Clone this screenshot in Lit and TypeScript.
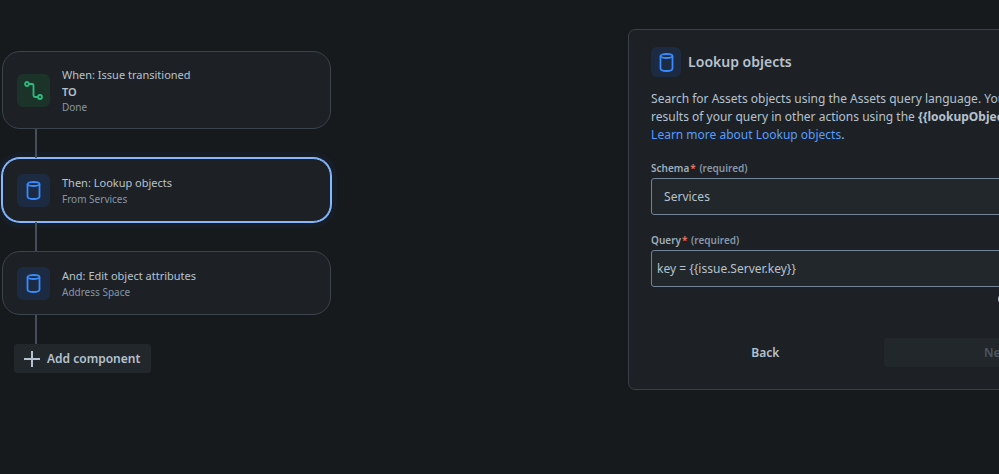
import { LitElement, html, css, svg, nothing } from "lit";
import { customElement } from "lit/decorators.js";
import { classMap } from "lit/directives/class-map.js";

interface Step {
  title: string;
  strong?: string;
  detail: string;
  kind: "trigger" | "assets";
  selected?: boolean;
}

const steps: Step[] = [
  { title: "When: Issue transitioned", strong: "TO", detail: "Done", kind: "trigger" },
  { title: "Then: Lookup objects", detail: "From Services", kind: "assets", selected: true },
  { title: "And: Edit object attributes", detail: "Address Space", kind: "assets" },
];

const transition = svg`
  <circle cx="3" cy="3" r="2"></circle>
  <circle cx="16" cy="16" r="2"></circle>
  <path d="M5 3H8Q9.500 3 9.500 4.500V14.500Q9.500 16 11 16H14"></path>`;

const cylinder = svg`
  <ellipse cx="9.500" cy="3" rx="6" ry="2"></ellipse>
  <path d="M3.500 3V15.500C3.500 16.900 6 18 9.500 18S15.500 16.900 15.500 15.500V3"></path>`;

const tile = (kind: Step["kind"]) => html`
  <span class=${classMap({ tile: true, [kind]: true })}>
    <svg viewBox="0 0 19 19" aria-hidden="true">${kind === "trigger" ? transition : cylinder}</svg>
  </span>`;

@customElement("app-root")
export class AppRoot extends LitElement {
  static styles = css`
    :host {
      display: block;
      min-height: 100vh;
      box-sizing: border-box;
      overflow: hidden;
      background: #161a1d;
      color: #b6c2cf;
      font: 12px/18px "Noto Sans", "Open Sans", sans-serif;
    }
    * { box-sizing: border-box; }
    .layout {
      display: flex;
      align-items: flex-start;
      padding-left: 2px;
    }
    .flow {
      flex: 0 0 33%;
      margin-top: 51px;
    }
    .card {
      display: flex;
      align-items: center;
      gap: 12px;
      min-height: 64px;
      padding: 14px;
      border: 1px solid #3b444c;
      border-radius: 18px;
      background: #1d2125;
    }
    .card.selected {
      border-color: #85b8ff;
      box-shadow: 0 0 0 1px #85b8ff, 0 0 0 6px #161d26;
    }
    .title, .strong, .detail { margin: 0; }
    .title { font-size: 11px; font-weight: 400; line-height: 18px; }
    .strong { font-size: 11px; font-weight: 600; line-height: 16px; }
    .detail { font: 10px/14px "Noto Sans", "Open Sans", sans-serif; color: #8696a7; }
    .step::after {
      content: "";
      display: block;
      position: relative;
      z-index: 1;
      width: 2px;
      height: 29px;
      margin-left: 33px;
      background: #454f59;
    }
    .tile {
      flex: none;
      display: grid;
      place-items: center;
      width: 33px;
      height: 33px;
      border-radius: 6px;
    }
    .tile svg {
      width: 19px;
      height: 19px;
      fill: none;
      stroke: currentColor;
      stroke-width: 1.800;
    }
    .trigger { background: #1c3329; color: #2abb7f; }
    .assets { background: #1c2b41; color: #388bff; }
    button {
      border: 0;
      border-radius: 3px;
      height: 29px;
      font: 600 12px/18px "Noto Sans", "Open Sans", sans-serif;
      color: #b6c2cf;
      background: none;
    }
    .add {
      display: flex;
      align-items: center;
      gap: 7px;
      margin-left: 12px;
      padding: 0 11px 0 10px;
      background: #22272b;
    }
    .add svg { width: 16px; height: 16px; stroke: currentColor; stroke-width: 2; }
    .panel {
      flex: 0 0 37%;
      min-width: 507px;
      margin: 29px 0 0 29.8%;
      padding: 17px 22px 22px;
      border: 1px solid #38414a;
      border-radius: 7px;
      background: #1d2125;
    }
    .heading { display: flex; align-items: center; gap: 7px; }
    .heading .tile { width: 30px; height: 30px; }
    h2 { margin: 0; font-size: 14px; font-weight: 600; line-height: 20px; }
    .about { margin: 13px 0 17px; white-space: nowrap; }
    a { color: #579dff; text-decoration: none; }
    label {
      display: block;
      margin-bottom: 3px;
      font-size: 10px;
      font-weight: 600;
      line-height: 14px;
      color: #9fadbc;
    }
    .star { padding: 0 1px; color: #f87462; }
    .hint { color: #8696a7; }
    select, input {
      display: block;
      width: 100%;
      height: 37px;
      margin-bottom: 18px;
      padding: 0 5px;
      border: 1px solid #738496;
      border-radius: 3px;
      background: #22272b;
      color: #b6c2cf;
      font: 12px/18px "Noto Sans", "Open Sans", sans-serif;
      appearance: none;
    }
    select { padding: 0 12px; }
    input { margin-bottom: 5px; }
    .help {
      display: block;
      width: 14px;
      height: 14px;
      margin-left: 75%;
      fill: none;
      stroke: #b6c2cf;
      stroke-width: 2;
    }
    .actions { display: grid; grid-template-columns: 1fr 1fr; gap: 4px; margin-top: 32px; }
    .next { background: #22272b; color: #4a5663; }
  `;

  render() {
    return html`
      <main class="layout">
        <div class="flow">
          ${steps.map(
            (s) => html`
              <div class="step">
                <section class=${classMap({ card: true, selected: !!s.selected })}>
                  ${tile(s.kind)}
                  <div>
                    <h3 class="title">${s.title}</h3>
                    ${s.strong ? html`<p class="strong">${s.strong}</p>` : nothing}
                    <p class="detail">${s.detail}</p>
                  </div>
                </section>
              </div>`
          )}
          <button class="add" type="button">
            <svg viewBox="0 0 16 16" aria-hidden="true"><path d="M8 0V16M0 8H16"></path></svg>
            Add component
          </button>
        </div>
        <form class="panel" @submit=${(e: Event) => e.preventDefault()}>
          <div class="heading">${tile("assets")}<h2>Lookup objects</h2></div>
          <p class="about">
            Search for Assets objects using the Assets query language. You<br />
            results of your query in other actions using the <b>{{lookupObjects}}</b><br />
            <a href="#lookup">Learn more about Lookup objects</a>.
          </p>
          <label for="schema">Schema<span class="star">*</span> <span class="hint">(required)</span></label>
          <select id="schema"><option>Services</option></select>
          <label for="query">Query<span class="star">*</span> <span class="hint">(required)</span></label>
          <input id="query" type="text" .value=${"key = {{issue.Server.key}}"} />
          <svg class="help" viewBox="0 0 14 14" aria-hidden="true"><circle cx="7" cy="7" r="5"></circle></svg>
          <div class="actions">
            <button type="button">Back</button>
            <button class="next" type="submit" disabled>Next</button>
          </div>
        </form>
      </main>
    `;
  }
}
